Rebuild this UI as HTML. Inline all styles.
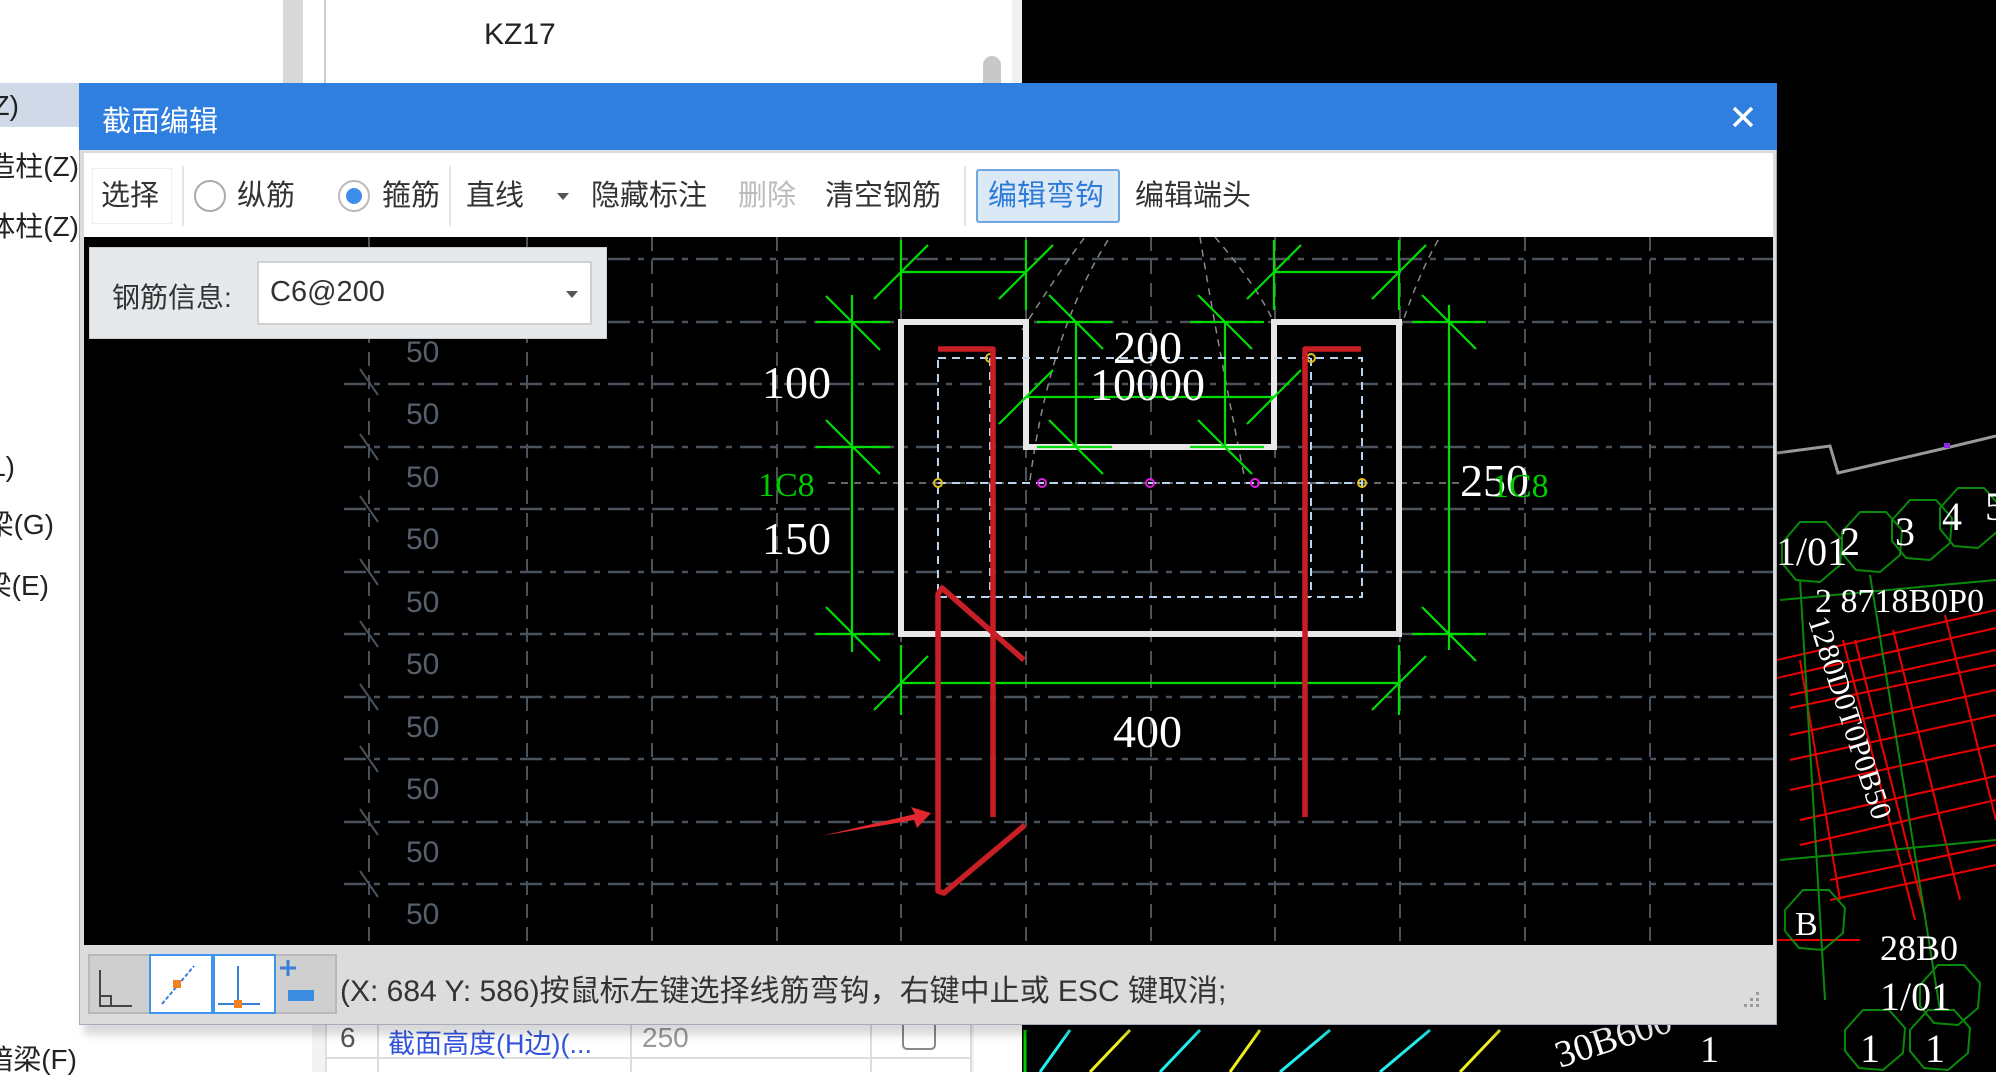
<!DOCTYPE html>
<html><head><meta charset="utf-8"><style>
*{margin:0;padding:0;box-sizing:border-box}
body{width:1996px;height:1072px;overflow:hidden;background:#fff;position:relative;font-family:"Liberation Sans","Noto Sans CJK SC",sans-serif;color:#222}
.abs{position:absolute}
.li{position:absolute;left:0;height:40px;display:flex;justify-content:flex-end;overflow:hidden;white-space:nowrap;font-size:28px;line-height:40px;color:#222}
.tb{position:absolute;top:175px;height:42px;line-height:42px;font-size:29px;color:#333;white-space:nowrap}
.sep{position:absolute;top:166px;width:2px;height:60px;background:#e4e4e4}
</style></head><body>
<div class="abs" style="left:0;top:83px;width:90px;height:44px;background:#cfd9e8"></div>
<div class="li" style="top:86px;width:19px">柱(Z)</div>
<div class="li" style="top:147px;width:79px">构造柱(Z)</div>
<div class="li" style="top:207px;width:79px">砌体柱(Z)</div>
<div class="li" style="top:447px;width:15px">(L)</div>
<div class="li" style="top:505px;width:54px">圈梁(G)</div>
<div class="li" style="top:566px;width:49px">连梁(E)</div>
<div class="li" style="top:1040px;width:77px">暗梁(F)</div>
<div class="abs" style="left:283px;top:0;width:20px;height:90px;background:#d8d8d8"></div>
<div class="abs" style="left:324px;top:0;width:2px;height:90px;background:#ccc"></div>
<div class="abs" style="left:484px;top:18px;font-size:30px;color:#222">KZ17</div>
<div class="abs" style="left:983px;top:56px;width:18px;height:40px;border-radius:9px;background:#c8c8c8"></div>
<div class="abs" style="left:1012px;top:0;width:10px;height:90px;background:#f0f0f0"></div>
<div class="abs" style="left:1022px;top:0;width:974px;height:1072px;background:#000"></div>
<div class="abs" style="left:312px;top:1025px;width:662px;height:47px;background:#f3f3f3"></div>
<div class="abs" style="left:325px;top:1025px;width:647px;height:47px;border-left:2px solid #ddd;border-right:2px solid #ddd;background:#fff"></div>
<div class="abs" style="left:377px;top:1025px;width:2px;height:47px;background:#ddd"></div>
<div class="abs" style="left:630px;top:1025px;width:2px;height:47px;background:#ddd"></div>
<div class="abs" style="left:870px;top:1025px;width:2px;height:47px;background:#ddd"></div>
<div class="abs" style="left:325px;top:1057px;width:647px;height:2px;background:#ddd"></div>
<div class="abs" style="left:340px;top:1022px;font-size:28px;color:#555">6</div>
<div class="abs" style="left:388px;top:1022px;font-size:27px;color:#3355dd;white-space:nowrap">截面高度(H边)(...</div>
<div class="abs" style="left:642px;top:1022px;font-size:28px;color:#999">250</div>
<div class="abs" style="left:902px;top:1018px;width:34px;height:32px;border:2px solid #888;border-radius:5px"></div>
<svg class="abs" style="left:0;top:0" width="1996" height="1072" viewBox="0 0 1996 1072">
<polyline points="1777,453 1830,446 1838,473 1946,448 1996,436" fill="none" stroke="#9a9a9a" stroke-width="3"/>
<rect x="1944" y="443" width="6" height="5" fill="#8a2be2"/>
<g stroke="#e00" stroke-width="2" fill="none">
<line x1="1777" y1="660" x2="1996" y2="610"/><line x1="1777" y1="678" x2="1996" y2="628"/>
<line x1="1790" y1="695" x2="1996" y2="650"/><line x1="1790" y1="708" x2="1996" y2="665"/>
<line x1="1790" y1="735" x2="1996" y2="690"/><line x1="1790" y1="760" x2="1996" y2="715"/>
<line x1="1790" y1="790" x2="1996" y2="745"/><line x1="1800" y1="820" x2="1996" y2="776"/>
<line x1="1800" y1="845" x2="1996" y2="800"/>
<line x1="1830" y1="880" x2="1996" y2="845"/><line x1="1830" y1="900" x2="1996" y2="865"/>
<line x1="1777" y1="940" x2="1860" y2="940"/>
<line x1="1843" y1="640" x2="1915" y2="920"/><line x1="1855" y1="640" x2="1925" y2="915"/>
<line x1="1893" y1="630" x2="1960" y2="900"/>
<line x1="1945" y1="615" x2="1996" y2="820"/><line x1="1800" y1="660" x2="1840" y2="900"/>
</g>
<g stroke="#0a8a0a" stroke-width="2" fill="none">
<polygon points="1782,543 1800,522 1826,522 1842,540 1840,565 1820,582 1796,580 1782,563"/>
<polygon points="1842,532 1860,512 1886,512 1902,530 1900,555 1880,572 1856,570 1842,553"/>
<polygon points="1892,520 1910,500 1936,500 1952,518 1950,543 1930,560 1906,558 1892,541"/>
<polygon points="1940,508 1958,488 1984,488 2000,506 1998,531 1978,548 1954,546 1940,529"/>
<polygon points="1785,910 1803,890 1829,890 1845,908 1843,933 1823,950 1799,948 1785,931"/>
<polygon points="1845,1030 1863,1010 1889,1010 1905,1028 1903,1053 1883,1070 1859,1068 1845,1051"/>
<polygon points="1910,1030 1928,1010 1954,1010 1970,1028 1968,1053 1948,1070 1924,1068 1910,1051"/>
<polygon points="1920,985 1938,965 1964,965 1980,983 1978,1008 1958,1025 1934,1023 1920,1006"/>
<line x1="1800" y1="580" x2="1825" y2="1000"/><line x1="1780" y1="600" x2="1996" y2="580"/>
<line x1="1780" y1="860" x2="1996" y2="840"/><line x1="1870" y1="575" x2="1940" y2="1010"/>
</g>
<g fill="#fff" font-family="Liberation Serif,serif" font-size="40">
<text x="1776" y="565">1/01</text><text x="1840" y="555">2</text><text x="1895" y="545">3</text><text x="1942" y="530">4</text><text x="1985" y="520">5</text>
<text x="1815" y="612" font-size="34">2 8718B0P0</text>
<text x="1795" y="935" font-size="34">B</text><text x="1880" y="960" font-size="36">28B0</text>
<text x="1880" y="1010">1/01</text><text x="1860" y="1062">1</text><text x="1925" y="1062">1</text>
<text x="1808" y="620" font-size="30" transform="rotate(72 1808 620)">1280D0T0P0B50</text>
</g>
<g stroke-width="3">
<line x1="1040" y1="1072" x2="1070" y2="1030" stroke="#2ee"/><line x1="1090" y1="1072" x2="1130" y2="1030" stroke="#ee2"/>
<line x1="1160" y1="1072" x2="1200" y2="1030" stroke="#2ee"/><line x1="1230" y1="1072" x2="1260" y2="1030" stroke="#ee2"/>
<line x1="1280" y1="1072" x2="1330" y2="1030" stroke="#2ee"/><line x1="1380" y1="1072" x2="1430" y2="1030" stroke="#2ee"/>
<line x1="1460" y1="1072" x2="1500" y2="1030" stroke="#ee2"/><line x1="1025" y1="1030" x2="1025" y2="1072" stroke="#0c0"/>
</g>
<text x="1560" y="1068" fill="#fff" font-family="Liberation Serif,serif" font-size="38" transform="rotate(-18 1560 1068)">30B600</text>
<text x="1700" y="1062" fill="#fff" font-family="Liberation Serif,serif" font-size="38">1</text>
</svg>
<div class="abs" style="left:84px;top:90px;width:1700px;height:945px;background:rgba(0,0,0,0.15);filter:blur(4px)"></div>
<div class="abs" style="left:79px;top:83px;width:1698px;height:942px;background:#dcdcdc;border:1px solid #aab"></div>
<div class="abs" style="left:79px;top:83px;width:1698px;height:67px;background:#2e7fdf"></div>
<div class="abs" style="left:102px;top:98px;font-size:29px;color:#fff">截面编辑</div>
<svg class="abs" style="left:1732px;top:106px" width="22" height="22"><path d="M2 2L20 20M20 2L2 20" stroke="#fff" stroke-width="3.5"/></svg>
<div class="abs" style="left:84px;top:153px;width:1689px;height:84px;background:#fff"></div>
<div class="abs" style="left:92px;top:168px;width:80px;height:56px;border:1px solid #f0f0f0"></div>
<div class="tb" style="left:101px">选择</div>
<div class="sep" style="left:182px"></div>
<div class="abs" style="left:194px;top:180px;width:32px;height:32px;border:2px solid #aaa;border-radius:50%"></div>
<div class="tb" style="left:237px">纵筋</div>
<div class="abs" style="left:338px;top:180px;width:32px;height:32px;border:2px solid #bbb;border-radius:50%;background:#fff"></div>
<div class="abs" style="left:346px;top:188px;width:16px;height:16px;border-radius:50%;background:#3d8ee8"></div>
<div class="tb" style="left:382px">箍筋</div>
<div class="sep" style="left:449px"></div>
<div class="tb" style="left:466px">直线</div>
<div class="abs" style="left:557px;top:193px;border-left:6px solid transparent;border-right:6px solid transparent;border-top:7px solid #555"></div>
<div class="tb" style="left:591px">隐藏标注</div>
<div class="tb" style="left:738px;color:#bbb">删除</div>
<div class="tb" style="left:825px">清空钢筋</div>
<div class="sep" style="left:964px"></div>
<div class="abs" style="left:976px;top:169px;width:144px;height:54px;background:#dbe9f7;border:2px solid #6fa8e0;border-radius:3px"></div>
<div class="tb" style="left:988px;color:#2f7bd8">编辑弯钩</div>
<div class="tb" style="left:1135px">编辑端头</div>
<svg class="abs" style="left:84px;top:237px" width="1689" height="708" viewBox="84 237 1689 708">
<rect x="84" y="237" width="1689" height="708" fill="#000"/>
<g stroke="#4a525c" stroke-width="2.5" stroke-dasharray="22 8 6 8" fill="none">
<line x1="344" y1="259" x2="1773" y2="259"/><line x1="344" y1="322" x2="1773" y2="322"/><line x1="344" y1="384" x2="1773" y2="384"/>
<line x1="344" y1="447" x2="1773" y2="447"/><line x1="344" y1="509" x2="1773" y2="509"/><line x1="344" y1="572" x2="1773" y2="572"/>
<line x1="344" y1="634" x2="1773" y2="634"/><line x1="344" y1="697" x2="1773" y2="697"/><line x1="344" y1="759" x2="1773" y2="759"/>
<line x1="344" y1="822" x2="1773" y2="822"/><line x1="344" y1="884" x2="1773" y2="884"/>
</g>
<g stroke="#4a525c" stroke-width="2" stroke-dasharray="14 9" fill="none">
<line x1="369" y1="237" x2="369" y2="945"/>
<line x1="527" y1="237" x2="527" y2="945"/><line x1="652" y1="237" x2="652" y2="945"/><line x1="777" y1="237" x2="777" y2="945"/>
<line x1="901" y1="237" x2="901" y2="945"/><line x1="1026" y1="237" x2="1026" y2="945"/><line x1="1151" y1="237" x2="1151" y2="945"/>
<line x1="1275" y1="237" x2="1275" y2="945"/><line x1="1400" y1="237" x2="1400" y2="945"/><line x1="1525" y1="237" x2="1525" y2="945"/>
<line x1="1650" y1="237" x2="1650" y2="945"/>
</g>
<g stroke="#4a525c" stroke-width="2">
<line x1="360" y1="369" x2="378" y2="395"/><line x1="360" y1="434" x2="378" y2="460"/><line x1="360" y1="496" x2="378" y2="522"/>
<line x1="360" y1="559" x2="378" y2="585"/><line x1="360" y1="621" x2="378" y2="647"/><line x1="360" y1="684" x2="378" y2="710"/>
<line x1="360" y1="746" x2="378" y2="772"/><line x1="360" y1="809" x2="378" y2="835"/><line x1="360" y1="871" x2="378" y2="897"/>
</g>
<g fill="#56606c" font-family="Liberation Sans Narrow,Liberation Sans,sans-serif" font-size="30">
<text x="406" y="362">50</text><text x="406" y="424">50</text><text x="406" y="487">50</text><text x="406" y="549">50</text>
<text x="406" y="612">50</text><text x="406" y="674">50</text><text x="406" y="737">50</text><text x="406" y="799">50</text>
<text x="406" y="862">50</text><text x="406" y="924">50</text>
</g>
<g stroke="#888" stroke-width="1.5" stroke-dasharray="7 6" fill="none">
<path d="M1022 330 Q1060 270 1085 237"/><path d="M1030 480 Q1050 330 1110 237"/>
<path d="M1200 237 Q1215 330 1245 480"/><path d="M1215 237 Q1260 290 1275 325"/>
<path d="M1400 330 Q1420 270 1440 237"/>
<line x1="828" y1="483" x2="1460" y2="483"/>
</g>
<polygon points="901,322 1026,322 1026,447 1274,447 1274,322 1399,322 1399,634 901,634" fill="none" stroke="#e8e8e8" stroke-width="6"/>
<g stroke="#0d0" stroke-width="2.2" fill="none">
<line x1="852" y1="295" x2="852" y2="652"/>
<line x1="816" y1="322" x2="890" y2="322"/><line x1="816" y1="447" x2="890" y2="447"/><line x1="816" y1="634" x2="890" y2="634"/>
<line x1="826" y1="296" x2="880" y2="350"/><line x1="826" y1="420" x2="880" y2="474"/><line x1="826" y1="607" x2="880" y2="661"/>
<line x1="1449" y1="305" x2="1449" y2="650"/>
<line x1="1412" y1="322" x2="1486" y2="322"/><line x1="1412" y1="634" x2="1486" y2="634"/>
<line x1="1422" y1="295" x2="1476" y2="349"/><line x1="1422" y1="607" x2="1476" y2="661"/>
<line x1="901" y1="240" x2="901" y2="310"/><line x1="1026" y1="240" x2="1026" y2="310"/>
<line x1="1274" y1="240" x2="1274" y2="310"/><line x1="1399" y1="240" x2="1399" y2="310"/>
<line x1="901" y1="272" x2="1026" y2="272"/><line x1="1274" y1="272" x2="1399" y2="272"/>
<line x1="874" y1="299" x2="928" y2="245"/><line x1="999" y1="299" x2="1053" y2="245"/>
<line x1="1247" y1="299" x2="1301" y2="245"/><line x1="1372" y1="299" x2="1426" y2="245"/>
<line x1="1026" y1="397" x2="1274" y2="397"/>
<line x1="1076" y1="322" x2="1076" y2="447"/><line x1="1225" y1="322" x2="1225" y2="447"/>
<line x1="1037" y1="322" x2="1112" y2="322"/><line x1="1190" y1="322" x2="1264" y2="322"/>
<line x1="1037" y1="447" x2="1112" y2="447"/><line x1="1190" y1="447" x2="1264" y2="447"/>
<line x1="1049" y1="295" x2="1103" y2="349"/><line x1="1198" y1="295" x2="1252" y2="349"/>
<line x1="1049" y1="420" x2="1103" y2="474"/><line x1="1198" y1="420" x2="1252" y2="474"/>
<line x1="999" y1="424" x2="1053" y2="370"/><line x1="1247" y1="424" x2="1301" y2="370"/>
<line x1="901" y1="645" x2="901" y2="715"/><line x1="1399" y1="645" x2="1399" y2="715"/>
<line x1="901" y1="683" x2="1399" y2="683"/>
<line x1="874" y1="710" x2="928" y2="656"/><line x1="1372" y1="710" x2="1426" y2="656"/>
</g>
<g stroke="#b8d4ee" stroke-width="2" stroke-dasharray="8 6" fill="none">
<rect x="938" y="358" width="424" height="239"/>
<line x1="990" y1="358" x2="990" y2="597"/><line x1="1311" y1="358" x2="1311" y2="597"/>
<line x1="938" y1="483" x2="1362" y2="483"/>
</g>
<g fill="none" stroke-width="2">
<circle cx="938" cy="483" r="4" stroke="#e0c020"/><circle cx="1362" cy="483" r="4" stroke="#e0c020"/>
<circle cx="990" cy="358" r="4" stroke="#e0c020"/><circle cx="1311" cy="358" r="4" stroke="#e0c020"/>
<circle cx="1042" cy="483" r="4" stroke="#e020e0"/><circle cx="1150" cy="483" r="4" stroke="#e020e0"/><circle cx="1255" cy="483" r="4" stroke="#e020e0"/>
</g>
<g stroke="#c81e26" stroke-width="5.5" fill="none" stroke-linejoin="round">
<polyline points="938,349 993,349 993,817"/>
<polyline points="1361,349 1305,349 1305,817"/>
<polyline points="1024,660 942,588 938,594 938,891 944,893 1025,825"/>
</g>
<polygon points="821,836 915,814 911,807 931,813 917,828 914,820" fill="#e0282e"/>
<g fill="#fff" font-family="Liberation Serif,serif" font-size="46">
<text x="762" y="398">100</text><text x="762" y="554">150</text>
<text x="1113" y="363">200</text><text x="1090" y="400">10000</text>
<text x="1113" y="747">400</text><text x="1460" y="496">250</text>
</g>
<g fill="#0c0" font-family="Liberation Serif,serif" font-size="34">
<text x="758" y="496">1C8</text><text x="1492" y="497">1C8</text>
</g>
</svg>
<div class="abs" style="left:89px;top:247px;width:518px;height:92px;background:#e6e9ec;border:1px solid #ccc"></div>
<div class="abs" style="left:112px;top:276px;font-size:28px;color:#333">钢筋信息:</div>
<div class="abs" style="left:257px;top:261px;width:335px;height:64px;background:#fff;border:2px solid #d0d0d0"></div>
<div class="abs" style="left:270px;top:276px;font-size:29px;color:#333">C6@200</div>
<div class="abs" style="left:566px;top:291px;border-left:6px solid transparent;border-right:6px solid transparent;border-top:7px solid #555"></div>
<div class="abs" style="left:84px;top:945px;width:1689px;height:75px;background:#dcdcdc"></div>
<div class="abs" style="left:88px;top:954px;width:249px;height:60px;background:#cfcfcf;border:2px solid #b8b8b8"></div>
<div class="abs" style="left:149px;top:954px;width:64px;height:60px;background:#fff;border:2px solid #3d95f0"></div>
<div class="abs" style="left:213px;top:954px;width:63px;height:60px;background:#fff;border:2px solid #3d95f0"></div>
<svg class="abs" style="left:88px;top:954px" width="249" height="60">
<path d="M12 16V52H44M12 42H23V52" stroke="#444" stroke-width="2" fill="none"/>
<line x1="74" y1="50" x2="106" y2="12" stroke="#3a7fd6" stroke-width="2" stroke-dasharray="4 2"/>
<rect x="85" y="26" width="8" height="8" fill="#f08020"/>
<path d="M150 12V50M130 50H172" stroke="#3a7fd6" stroke-width="2" fill="none"/>
<rect x="146" y="46" width="8" height="8" fill="#f08020"/>
<path d="M192 14H208M200 6V22" stroke="#3a7fd6" stroke-width="3"/>
<rect x="200" y="36" width="26" height="11" fill="#3a8de0"/>
</svg>
<div class="abs" style="left:340px;top:966px;font-size:30px;color:#333;white-space:nowrap">(X: 684 Y: 586)按鼠标左键选择线筋弯钩，右键中止或 ESC 键取消;</div>
<svg class="abs" style="left:1744px;top:992px" width="18" height="18"><g fill="#999"><rect x="12" y="0" width="3" height="3"/><rect x="6" y="6" width="3" height="3"/><rect x="12" y="6" width="3" height="3"/><rect x="0" y="12" width="3" height="3"/><rect x="6" y="12" width="3" height="3"/><rect x="12" y="12" width="3" height="3"/></g></svg>
</body></html>
